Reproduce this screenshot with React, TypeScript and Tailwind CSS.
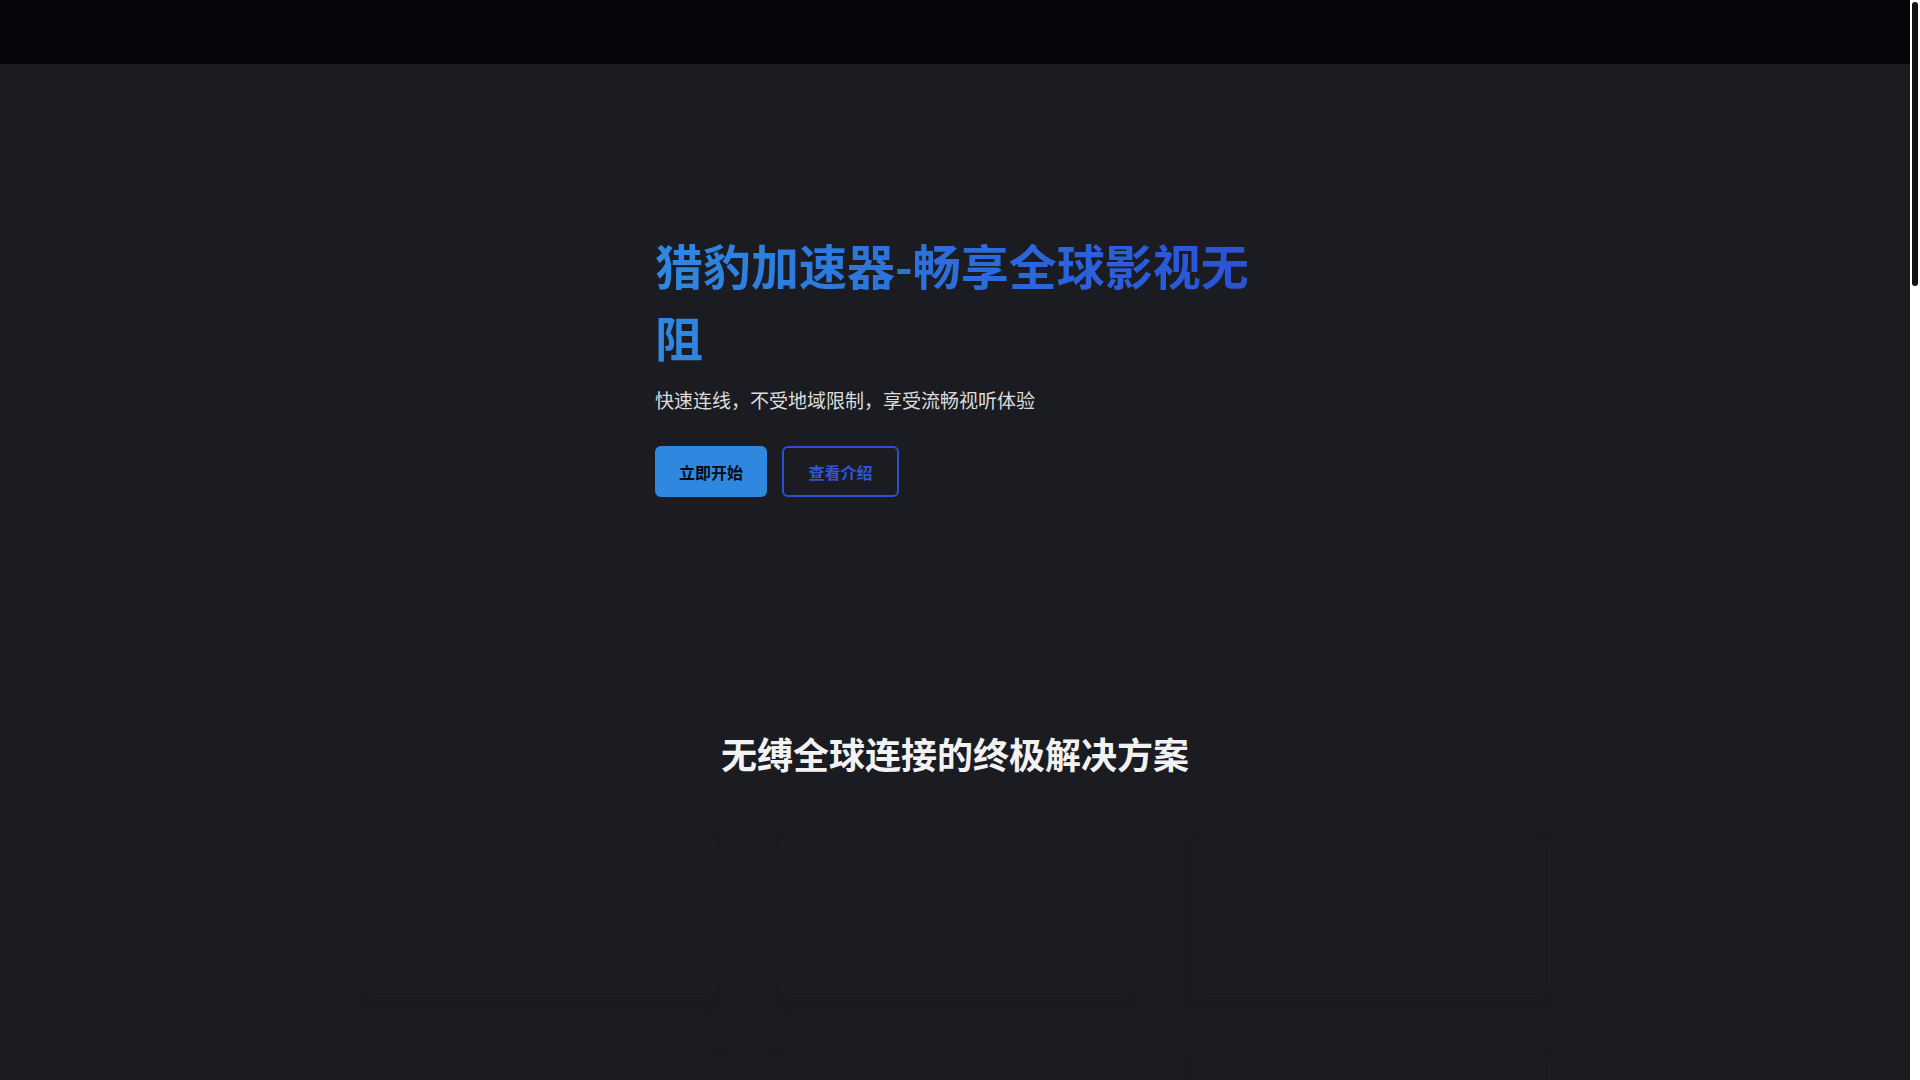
import React from "react";

const features = [
  { title: "全球节点", desc: "覆盖多个国家与地区的高速线路" },
  { title: "极速连线", desc: "智能选路，延迟更低更稳定" },
  { title: "隐私保护", desc: "加密传输，守护每一次访问" },
  { title: "影视解锁", desc: "畅看海外流媒体内容" },
  { title: "多端同步", desc: "手机、电脑、平板一号通用" },
  { title: "贴心客服", desc: "全天候在线，随时为你解答" },
];

function FeatureCard({ title, desc }: { title: string; desc: string }) {
  // Cards are mid fade-in: kept nearly invisible
  return (
    <div className="h-[160px] rounded-lg border border-white/[0.012] bg-[#1b1c21] shadow-[0_4px_12px_rgba(0,0,0,0.08)]">
      <div className="p-6 opacity-0">
        <h3 className="text-lg font-bold text-white">{title}</h3>
        <p className="mt-2 text-sm text-gray-400">{desc}</p>
      </div>
    </div>
  );
}

function Scrollbar() {
  // Page scrollbar: light track with a slim dark thumb
  return (
    <div className="fixed top-0 right-0 z-10 h-screen w-[10px] bg-white">
      <div className="mx-auto mt-[2px] h-[284px] w-[6px] rounded-full bg-[#111111]" />
    </div>
  );
}

export default function App() {
  return (
    <div
      className="min-h-[4100px] bg-[#1b1c21] pr-[10px]"
      style={{ fontFamily: '"Noto Sans CJK SC", "Noto Sans", sans-serif' }}
    >
      <header className="h-16 bg-[#05050a]" />

      <section className="pt-[164px] pb-[156px]">
        <div className="mx-auto w-[600px]">
          <h1 className="bg-gradient-to-r from-[#3088e0] to-[#2b50d8] bg-clip-text text-5xl leading-[72px] font-bold text-transparent">
            猎豹加速器-畅享全球影视无阻
          </h1>
          <p className="mt-[14px] text-[19px] leading-[28px] text-[#dcdcdc]">
            快速连线，不受地域限制，享受流畅视听体验
          </p>
          <div className="mt-8 flex gap-[15px]">
            <button className="flex h-[51px] w-[112px] items-center justify-center rounded-md bg-[#2f88e0] text-base font-bold text-[#0a0a12]">
              立即开始
            </button>
            <button className="flex h-[51px] w-[117px] items-center justify-center rounded-md border-2 border-[#2d4fd6] text-base font-bold text-[#2f56d8]">
              查看介绍
            </button>
          </div>
        </div>
      </section>

      <section className="pt-20">
        <h2 className="text-center text-4xl font-bold text-[#f2f2f2]">
          无缚全球连接的终极解决方案
        </h2>
        <div className="mx-auto mt-16 grid w-[1180px] grid-cols-3 gap-x-[62px] gap-y-[53px]">
          {features.map((f) => (
            <FeatureCard key={f.title} title={f.title} desc={f.desc} />
          ))}
        </div>
      </section>

      <Scrollbar />
    </div>
  );
}
